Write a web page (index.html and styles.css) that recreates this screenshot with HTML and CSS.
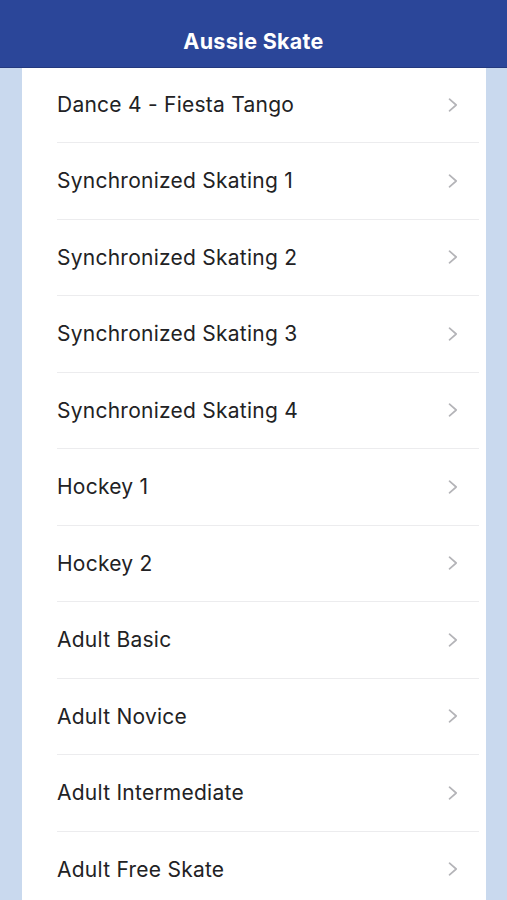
FILE: index.html
```html
<!DOCTYPE html>
<html>
<head>
<meta charset="utf-8">
<link rel="stylesheet" href="styles.css">
</head>
<body>
<header class="nav"><h1 class="title">Aussie Skate</h1></header>
<main class="page">
  <ul class="list">
    <li class="row first"><span class="label">Dance 4 - Fiesta Tango</span><svg class="chev" viewBox="0 0 10 14"><path d="M1.5 1.2 L8.2 7 L1.5 12.8"/></svg></li>
    <li class="row"><span class="label">Synchronized Skating 1</span><svg class="chev" viewBox="0 0 10 14"><path d="M1.5 1.2 L8.2 7 L1.5 12.8"/></svg></li>
    <li class="row"><span class="label">Synchronized Skating 2</span><svg class="chev" viewBox="0 0 10 14"><path d="M1.5 1.2 L8.2 7 L1.5 12.8"/></svg></li>
    <li class="row"><span class="label">Synchronized Skating 3</span><svg class="chev" viewBox="0 0 10 14"><path d="M1.5 1.2 L8.2 7 L1.5 12.8"/></svg></li>
    <li class="row"><span class="label">Synchronized Skating 4</span><svg class="chev" viewBox="0 0 10 14"><path d="M1.5 1.2 L8.2 7 L1.5 12.8"/></svg></li>
    <li class="row"><span class="label">Hockey 1</span><svg class="chev" viewBox="0 0 10 14"><path d="M1.5 1.2 L8.2 7 L1.5 12.8"/></svg></li>
    <li class="row"><span class="label">Hockey 2</span><svg class="chev" viewBox="0 0 10 14"><path d="M1.5 1.2 L8.2 7 L1.5 12.8"/></svg></li>
    <li class="row"><span class="label">Adult Basic</span><svg class="chev" viewBox="0 0 10 14"><path d="M1.5 1.2 L8.2 7 L1.5 12.8"/></svg></li>
    <li class="row"><span class="label">Adult Novice</span><svg class="chev" viewBox="0 0 10 14"><path d="M1.5 1.2 L8.2 7 L1.5 12.8"/></svg></li>
    <li class="row"><span class="label">Adult Intermediate</span><svg class="chev" viewBox="0 0 10 14"><path d="M1.5 1.2 L8.2 7 L1.5 12.8"/></svg></li>
    <li class="row"><span class="label">Adult Free Skate</span><svg class="chev" viewBox="0 0 10 14"><path d="M1.5 1.2 L8.2 7 L1.5 12.8"/></svg></li>
  </ul>
</main>
</body>
</html>
```
FILE: styles.css
```css
html, body {
  margin: 0;
  padding: 0;
  height: 900px;
  overflow: hidden;
  background: #c9d9ee;
  font-family: Inter, "Noto Sans", sans-serif;
}
.nav {
  height: 67px;
  background: #2b4699;
  display: flex;
  align-items: center;
  justify-content: center;
  border-bottom: 1px solid #24397e;
}
.title {
  margin: 0;
  padding-top: 14px;
  font-size: 21.5px;
  font-weight: 700;
  color: #ffffff;
  letter-spacing: 0.3px;
}
.page {
  margin: 0 21px 0 22px;
  background: #ffffff;
  height: 832px;
}
.list {
  list-style: none;
  margin: 0;
  padding: 0 0 0 35px;
}
.row {
  height: 76.5px;
  box-sizing: border-box;
  display: flex;
  align-items: center;
  justify-content: space-between;
  padding-right: 21px;
  border-top: 1px solid #ececee;
  margin-right: 7px;
}
.row.first {
  height: 74px;
  border-top: none;
  padding-bottom: 1px;
}
.label {
  font-size: 21px;
  color: #222224;
  letter-spacing: 0.25px;
}
.chev {
  width: 10px;
  height: 14px;
  fill: none;
  stroke: #b4b4b8;
  stroke-width: 1.7;
  stroke-linecap: round;
  stroke-linejoin: round;
}
```
